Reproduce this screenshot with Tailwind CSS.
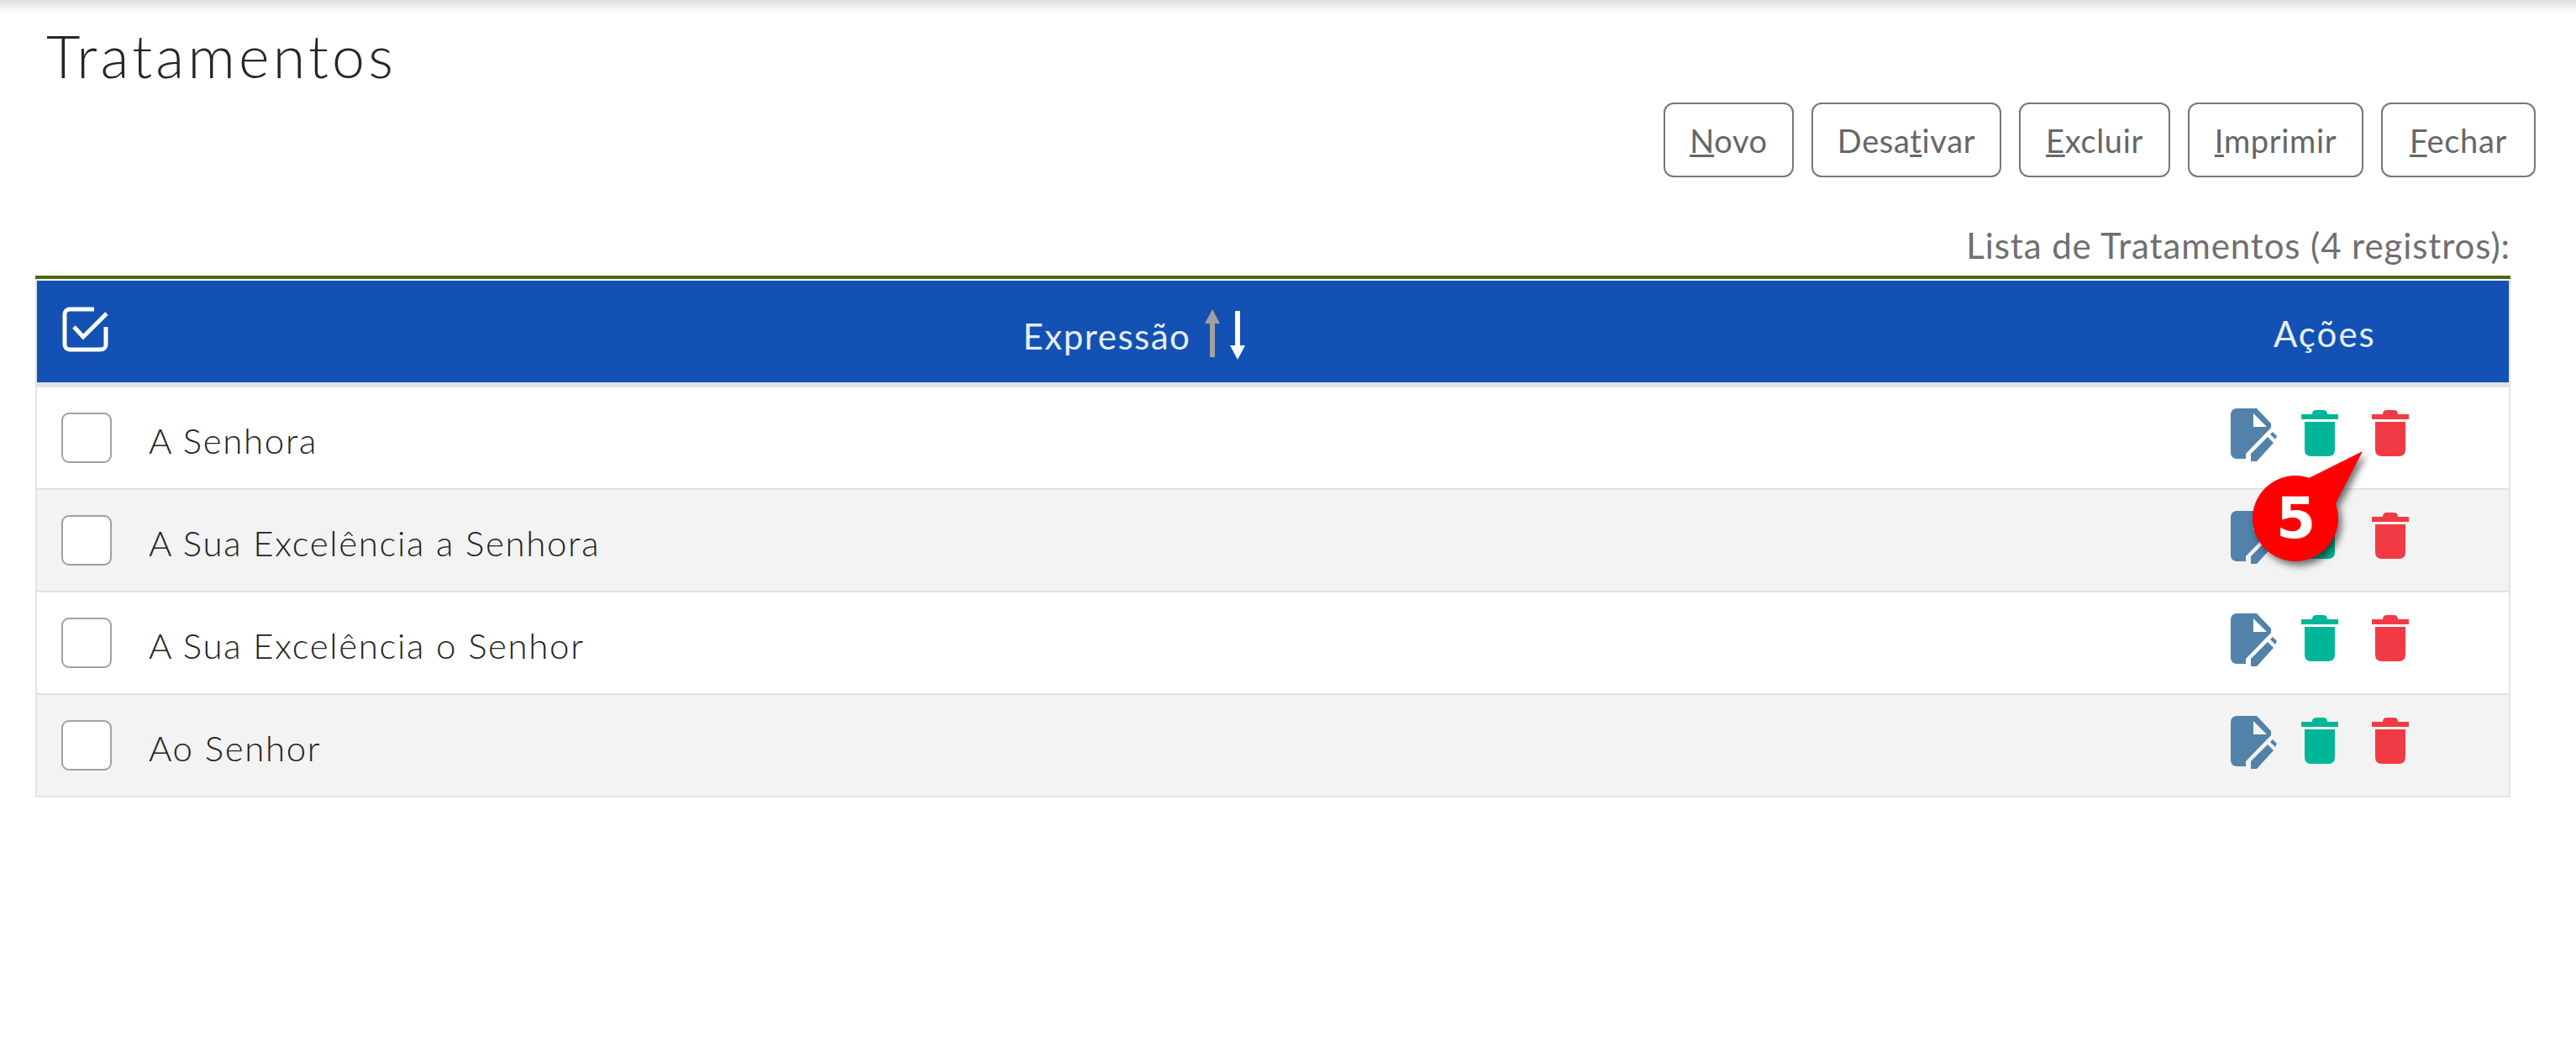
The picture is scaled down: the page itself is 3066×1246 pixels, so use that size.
<!DOCTYPE html>
<html lang="pt-BR">

<head>
  <meta charset="UTF-8" />
  <title>Tratamentos</title>
  <script src="https://cdn.jsdelivr.net/npm/@tailwindcss/browser@4"></script>
</head>

<body class="bg-white font-['Lato','Open_Sans',sans-serif] text-[#333]">
  <div class="relative w-[3066px] h-[1246px] overflow-hidden">
    <div class="h-[16px] bg-gradient-to-b from-[#dfdfdf] to-white"></div>

    <h1 class="pl-[55px] h-[60px] mt-[20px] text-[70px] leading-[60px] font-light tracking-[4.2px] text-[#262626]">Tratamentos</h1>

    <div class="flex justify-end gap-[21px] pr-[48px] mt-[26px] text-[38px] tracking-[0.65px] text-[#666]">
      <button class="w-[155px] h-[89px] pt-[2px] border-2 border-[#777] rounded-[12px]"><u>N</u>ovo</button>
      <button class="w-[226px] h-[89px] pt-[2px] border-2 border-[#777] rounded-[12px]">Desa<u>t</u>ivar</button>
      <button class="w-[180px] h-[89px] pt-[2px] border-2 border-[#777] rounded-[12px]"><u>E</u>xcluir</button>
      <button class="w-[209px] h-[89px] pt-[2px] border-2 border-[#777] rounded-[12px]"><u>I</u>mprimir</button>
      <button class="w-[184px] h-[89px] pt-[2px] border-2 border-[#777] rounded-[12px]"><u>F</u>echar</button>
    </div>

    <div class="ml-[42px] w-[2946px]">
      <div class="h-[117px] pt-[53px] text-right text-[42px] leading-[56px] tracking-[0.9px] text-[#6f6f6f]">Lista de Tratamentos (4 registros):</div>
      <div class="h-[4px] bg-[#4f6600]"></div>
      <div class="border-x-2 border-[#e3e3e3] pt-[2px]">

        <div class="flex items-center h-[121px] bg-[#1351b4] text-[42px] text-white/90">
          <div class="w-[100px] shrink-0 pl-[30px] -mt-[5px]">
            <svg width="58" height="56" viewBox="0 0 58 56" fill="none" stroke="white" stroke-width="5">
              <path d="M52 25 V46 a6 6 0 0 1 -6 6 H9 a6 6 0 0 1 -6 -6 V10 a6 6 0 0 1 6 -6 H38" />
              <path d="M14 25 L25 37 L53 9" />
            </svg>
          </div>
          <div class="flex-1 flex items-center justify-center pr-[80px]">
            <span class="pt-[12px] tracking-[1.5px]">Expressão</span>
            <svg width="60" height="62" viewBox="0 0 60 62" class="ml-[13px] mt-[8px]">
              <path d="M13 0 L22 17 H16 V57 H10 V17 H4 Z" fill="#a0a0a0" />
              <path d="M40 2 H46 V43 H52 L43 60 L34 43 H40 Z" fill="white" />
            </svg>
          </div>
          <div class="w-[342px] shrink-0 pl-[62px] pt-[6px] tracking-[2px]">Ações</div>
        </div>
        <div class="h-[6px] bg-[#dfe3e8]"></div>

        <div class="flex items-center h-[122px] border-b-2 border-[#e0e3e7] bg-white">
          <span class="ml-[29px] w-[60px] h-[60px] bg-white border-2 border-[#a0a0a0] rounded-[9px] shrink-0"></span>
          <span class="ml-[44px] flex-1 text-[42px] font-light tracking-[1.65px] text-[#222] pt-[6px]">A Senhora</span>
          <div class="flex items-start w-[331px] h-full pt-[25px] shrink-0">
            <svg width="56" height="64" viewBox="0 0 56 64" fill="#5282a9"><path d="M7 0 H31 L48 18 V23 L18 54 V60 H7 A7 7 0 0 1 0 53 V7 A7 7 0 0 1 7 0 Z M27 6 V22 H43 Z" fill-rule="evenodd" /><path d="M24 54 L44 34 L51 41 L31 63 H24 Z" /><path d="M47 31 L50 28 L55 33 L53 37 Z" /></svg>
            <svg class="ml-[28px] mt-[2px]" width="44" height="55" viewBox="0 0 44 55" fill="#00b598"><path d="M13 5 Q13 0 18 0 H26 Q31 0 31 5 H44 V11 H0 V5 Z" /><path d="M4 14 H40 V47 Q40 55 32 55 H12 Q4 55 4 47 Z" /></svg>
            <svg class="ml-[40px] mt-[2px]" width="44" height="55" viewBox="0 0 44 55" fill="#f23a44"><path d="M13 5 Q13 0 18 0 H26 Q31 0 31 5 H44 V11 H0 V5 Z" /><path d="M4 14 H40 V47 Q40 55 32 55 H12 Q4 55 4 47 Z" /></svg>
          </div>
        </div>

        <div class="flex items-center h-[122px] border-b-2 border-[#e0e3e7] bg-[#f3f3f3]">
          <span class="ml-[29px] w-[60px] h-[60px] bg-white border-2 border-[#a0a0a0] rounded-[9px] shrink-0"></span>
          <span class="ml-[44px] flex-1 text-[42px] font-light tracking-[1.65px] text-[#222] pt-[6px]">A Sua Excelência a Senhora</span>
          <div class="flex items-start w-[331px] h-full pt-[25px] shrink-0">
            <svg width="56" height="64" viewBox="0 0 56 64" fill="#5282a9"><path d="M7 0 H31 L48 18 V23 L18 54 V60 H7 A7 7 0 0 1 0 53 V7 A7 7 0 0 1 7 0 Z M27 6 V22 H43 Z" fill-rule="evenodd" /><path d="M24 54 L44 34 L51 41 L31 63 H24 Z" /><path d="M47 31 L50 28 L55 33 L53 37 Z" /></svg>
            <svg class="ml-[28px] mt-[2px]" width="44" height="55" viewBox="0 0 44 55" fill="#00b598"><path d="M13 5 Q13 0 18 0 H26 Q31 0 31 5 H44 V11 H0 V5 Z" /><path d="M4 14 H40 V47 Q40 55 32 55 H12 Q4 55 4 47 Z" /></svg>
            <svg class="ml-[40px] mt-[2px]" width="44" height="55" viewBox="0 0 44 55" fill="#f23a44"><path d="M13 5 Q13 0 18 0 H26 Q31 0 31 5 H44 V11 H0 V5 Z" /><path d="M4 14 H40 V47 Q40 55 32 55 H12 Q4 55 4 47 Z" /></svg>
          </div>
        </div>

        <div class="flex items-center h-[122px] border-b-2 border-[#e0e3e7] bg-white">
          <span class="ml-[29px] w-[60px] h-[60px] bg-white border-2 border-[#a0a0a0] rounded-[9px] shrink-0"></span>
          <span class="ml-[44px] flex-1 text-[42px] font-light tracking-[1.65px] text-[#222] pt-[6px]">A Sua Excelência o Senhor</span>
          <div class="flex items-start w-[331px] h-full pt-[25px] shrink-0">
            <svg width="56" height="64" viewBox="0 0 56 64" fill="#5282a9"><path d="M7 0 H31 L48 18 V23 L18 54 V60 H7 A7 7 0 0 1 0 53 V7 A7 7 0 0 1 7 0 Z M27 6 V22 H43 Z" fill-rule="evenodd" /><path d="M24 54 L44 34 L51 41 L31 63 H24 Z" /><path d="M47 31 L50 28 L55 33 L53 37 Z" /></svg>
            <svg class="ml-[28px] mt-[2px]" width="44" height="55" viewBox="0 0 44 55" fill="#00b598"><path d="M13 5 Q13 0 18 0 H26 Q31 0 31 5 H44 V11 H0 V5 Z" /><path d="M4 14 H40 V47 Q40 55 32 55 H12 Q4 55 4 47 Z" /></svg>
            <svg class="ml-[40px] mt-[2px]" width="44" height="55" viewBox="0 0 44 55" fill="#f23a44"><path d="M13 5 Q13 0 18 0 H26 Q31 0 31 5 H44 V11 H0 V5 Z" /><path d="M4 14 H40 V47 Q40 55 32 55 H12 Q4 55 4 47 Z" /></svg>
          </div>
        </div>

        <div class="flex items-center h-[122px] border-b-2 border-[#e3e3e3] bg-[#f3f3f3]">
          <span class="ml-[29px] w-[60px] h-[60px] bg-white border-2 border-[#a0a0a0] rounded-[9px] shrink-0"></span>
          <span class="ml-[44px] flex-1 text-[42px] font-light tracking-[1.65px] text-[#222] pt-[6px]">Ao Senhor</span>
          <div class="flex items-start w-[331px] h-full pt-[25px] shrink-0">
            <svg width="56" height="64" viewBox="0 0 56 64" fill="#5282a9"><path d="M7 0 H31 L48 18 V23 L18 54 V60 H7 A7 7 0 0 1 0 53 V7 A7 7 0 0 1 7 0 Z M27 6 V22 H43 Z" fill-rule="evenodd" /><path d="M24 54 L44 34 L51 41 L31 63 H24 Z" /><path d="M47 31 L50 28 L55 33 L53 37 Z" /></svg>
            <svg class="ml-[28px] mt-[2px]" width="44" height="55" viewBox="0 0 44 55" fill="#00b598"><path d="M13 5 Q13 0 18 0 H26 Q31 0 31 5 H44 V11 H0 V5 Z" /><path d="M4 14 H40 V47 Q40 55 32 55 H12 Q4 55 4 47 Z" /></svg>
            <svg class="ml-[40px] mt-[2px]" width="44" height="55" viewBox="0 0 44 55" fill="#f23a44"><path d="M13 5 Q13 0 18 0 H26 Q31 0 31 5 H44 V11 H0 V5 Z" /><path d="M4 14 H40 V47 Q40 55 32 55 H12 Q4 55 4 47 Z" /></svg>
          </div>
        </div>
      </div>
    </div>

    <!-- callout -->
    <div class="absolute left-[2672px] top-[527px] w-[150px] h-[150px]">
      <svg class="absolute inset-0 drop-shadow-[4px_5px_4px_rgba(0,0,0,0.55)]" width="150" height="150" viewBox="0 0 150 150">
        <circle cx="60" cy="90" r="51" fill="#ff0000" />
        <path d="M76 42 L140 10 L106 76 Z" fill="#ff0000" />
      </svg>
      <span class="absolute left-[37px] top-[52px] w-[46px] text-center text-[68px] leading-[76px] font-bold text-white font-['DejaVu_Sans',sans-serif]">5</span>
    </div>
  </div>
</body>

</html>
